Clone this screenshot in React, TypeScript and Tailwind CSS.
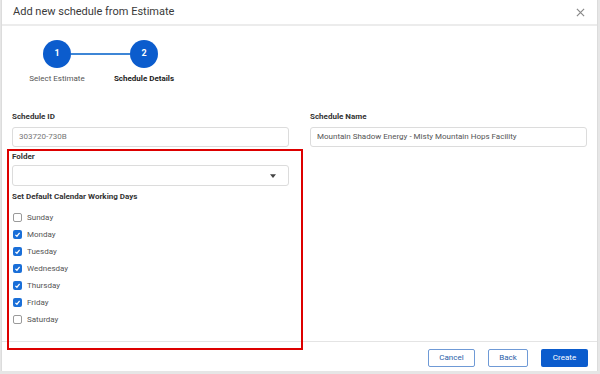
const days = [
  { name: "Sunday", on: false },
  { name: "Monday", on: true },
  { name: "Tuesday", on: true },
  { name: "Wednesday", on: true },
  { name: "Thursday", on: true },
  { name: "Friday", on: true },
  { name: "Saturday", on: false },
];

const Check = ({ on }: { on: boolean }) =>
  on ? (
    <span className="w-[9px] h-[9px] rounded-[2px] bg-[#1a6fd8] flex items-center justify-center">
      <svg width="7" height="7" viewBox="0 0 10 10">
        <path d="M2 5.5 L4.2 7.5 L8 2.8" stroke="white" strokeWidth="1.8" fill="none" />
      </svg>
    </span>
  ) : (
    <span className="w-[9px] h-[9px] rounded-[2px] border border-[#9a9a9a] bg-white" />
  );

const App = () => {
  return (
    <div
      className="w-[600px] h-[374px] bg-[#e6e6e6] relative overflow-hidden"
      style={{ fontFamily: "Roboto, 'Liberation Sans', sans-serif" }}
    >
      <div className="h-[371px] mx-[1px] mr-[2px] bg-white border-l border-r border-[#dcdcdc] flex flex-col">
        <div className="h-[26px] flex items-center justify-between px-[11px] border-b-2 border-[#ececec] bg-white">
          <span className="text-[11px] text-[#3a3a3a]">Add new schedule from Estimate</span>
          <svg width="9" height="9" viewBox="0 0 10 10" className="mr-[1px]">
            <path d="M1 1 L9 9 M9 1 L1 9" stroke="#888" strokeWidth="1.3" />
          </svg>
        </div>

        <div className="flex pl-[41px] pt-[14px]">
          <div className="flex flex-col items-center w-[28px]">
            <div className="w-[28px] h-[28px] rounded-full bg-[#0b5ccd] text-white text-[9px] font-bold flex items-center justify-center">
              1
            </div>
            <span className="mt-[5px] text-[8px] text-[#555] whitespace-nowrap">Select Estimate</span>
          </div>
          <div className="w-[59px] h-[2px] bg-[#3d86d6] mt-[13px]" />
          <div className="flex flex-col items-center w-[28px]">
            <div className="w-[28px] h-[28px] rounded-full bg-[#0b5ccd] text-white text-[9px] font-bold flex items-center justify-center">
              2
            </div>
            <span className="mt-[5px] text-[8px] font-bold text-[#222] whitespace-nowrap">Schedule Details</span>
          </div>
        </div>

        <div className="grid grid-cols-2 gap-x-[21px] px-[10px] mt-[26px]">
          <div className="flex flex-col">
            <span className="text-[8px] font-bold text-[#333] h-[12px]">Schedule ID</span>
            <div className="mt-[4px] h-[20px] border border-[#dcdcdc] rounded-[3px] flex items-center px-[6px] text-[8px] text-[#777]">
              303720-730B
            </div>
            <span className="mt-[4px] text-[8px] font-bold text-[#333] h-[12px]">Folder</span>
            <div className="mt-[2px] h-[21px] border border-[#dcdcdc] rounded-[3px] flex items-center justify-end px-[12px]">
              <svg width="6" height="4" viewBox="0 0 8 5">
                <path d="M0 0 L8 0 L4 5 Z" fill="#444" />
              </svg>
            </div>
            <span className="mt-[5px] h-[12px] text-[8px] font-bold text-[#333]">Set Default Calendar Working Days</span>
            <div className="flex flex-col mt-[10px] gap-[8px] pl-[1px]">
              {days.map((d) => (
                <div key={d.name} className="flex items-center gap-[5px] h-[9px]">
                  <Check on={d.on} />
                  <span className="text-[8px] text-[#555]">{d.name}</span>
                </div>
              ))}
            </div>
          </div>
          <div className="flex flex-col">
            <span className="text-[8px] font-bold text-[#333] h-[12px]">Schedule Name</span>
            <div className="mt-[4px] h-[20px] border border-[#dcdcdc] rounded-[3px] flex items-center px-[6px] text-[8px] text-[#555]">
              Mountain Shadow Energy - Misty Mountain Hops Facility
            </div>
          </div>
        </div>

        <div className="mt-auto h-[30px] border-t border-[#e4e4e4] flex items-center justify-end gap-[13px] pr-[9px] pt-[2px]">
          <button className="w-[47px] h-[18px] border border-[#6f9ad6] rounded-[2px] text-[8px] text-[#2a5ea8]">Cancel</button>
          <button className="w-[40px] h-[18px] border border-[#6f9ad6] rounded-[2px] text-[8px] text-[#2a5ea8]">Back</button>
          <button className="w-[47px] h-[18px] bg-[#0b5ccd] rounded-[2px] text-[8px] text-white">Create</button>
        </div>
      </div>

      <div className="absolute left-[7px] top-[149px] w-[296px] h-[201px] border-2 border-[#dd0000] pointer-events-none" />
    </div>
  );
};

export default App;
